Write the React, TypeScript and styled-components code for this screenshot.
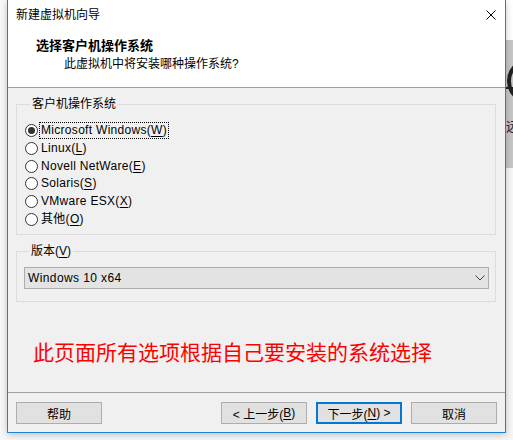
import styled, { createGlobalStyle } from 'styled-components';

const GlobalStyle = createGlobalStyle`
  html, body {
    margin: 0;
    padding: 0;
  }
  body {
    background: #f8f8f8;
    color: #000;
    font-family: "Liberation Sans", "Noto Sans CJK SC", sans-serif;
    font-size: 12px;
  }
`;

const Desktop = styled.div`
  display: flex;
  width: 513px;
  height: 440px;
  padding-left: 7px;
  box-sizing: border-box;
  overflow: hidden;
  background: #f8f8f8;
`;

const Window = styled.div`
  width: 499px;
  height: 433px;
  flex-shrink: 0;
  display: flex;
  flex-direction: column;
  box-sizing: border-box;
  background: #f0f0f0;
  border: 1px solid #1883d7;
  border-top: none;
  box-shadow: 0 2px 7px rgba(0, 0, 0, 0.22);
  position: relative;
  z-index: 1;
`;

const TitleBar = styled.div`
  height: 30px;
  display: flex;
  align-items: center;
  justify-content: space-between;
  padding: 0 9px 0 8px;
  background: #fff;
  line-height: 16px;
`;

const Header = styled.div`
  height: 57px;
  display: flex;
  flex-direction: column;
  padding-left: 28px;
  background: #fff;
`;

const HeaderTitle = styled.div`
  margin-top: 8px;
  font-size: 13px;
  font-weight: 700;
  line-height: 16px;
`;

const HeaderSub = styled.div`
  margin-top: 2px;
  padding-left: 28px;
  line-height: 16px;
`;

const Divider = styled.div`
  height: 1px;
  flex-shrink: 0;
  background: #a0a0a0;
`;

const Body = styled.div`
  flex: 1;
  display: flex;
  flex-direction: column;
  padding: 8px 9px 0 8px;
`;

const Group = styled.fieldset<{ $pad: string }>`
  margin: 0;
  min-width: 0;
  padding: ${(p) => p.$pad};
  border: 1px solid #dcdcdc;
  & + & {
    margin-top: 8px;
  }
`;

const Legend = styled.legend`
  margin-left: 5px;
  padding: 0 2px;
  line-height: 16px;
`;

const RadioRow = styled.div`
  height: 17.7px;
  display: flex;
  align-items: center;
`;

const RadioCircle = styled.span<{ $checked?: boolean }>`
  width: 13px;
  height: 13px;
  flex-shrink: 0;
  box-sizing: border-box;
  border: 1px solid #333;
  border-radius: 50%;
  background: #fff;
  display: flex;
  align-items: center;
  justify-content: center;
  &::after {
    content: '';
    width: 7px;
    height: 7px;
    border-radius: 50%;
    background: ${(p) => (p.$checked ? '#333' : 'transparent')};
  }
`;

const RadioLabel = styled.span<{ $focused?: boolean }>`
  margin-left: 1px;
  padding: 0 1px;
  line-height: 15px;
  letter-spacing: 0.3px;
  border: 1px dotted ${(p) => (p.$focused ? '#000' : 'transparent')};
`;

const Key = styled.u`
  text-decoration: underline;
  text-underline-offset: 2px;
`;

const Combo = styled.div`
  height: 22px;
  box-sizing: border-box;
  display: flex;
  align-items: center;
  justify-content: space-between;
  padding: 0 3px;
  border: 1px solid #adadad;
  background: #e3e3e3;
  letter-spacing: 0.4px;
`;

const Note = styled.div`
  margin-top: 38px;
  padding-left: 17px;
  color: #ff0000;
  font-size: 21px;
  line-height: 26px;
`;

const Footer = styled.div`
  display: flex;
  justify-content: space-between;
  padding: 9px 8px 8px;
`;

const ButtonGroup = styled.div`
  display: flex;
  gap: 9px;
`;

const Button = styled.button<{ $primary?: boolean }>`
  width: 86px;
  height: 22px;
  box-sizing: border-box;
  padding: 0;
  display: flex;
  align-items: center;
  justify-content: center;
  font: inherit;
  color: #000;
  background: #e1e1e1;
  border: ${(p) => (p.$primary ? '2px solid #0078d7' : '1px solid #adadad')};
`;

const Strip = styled.div`
  width: 7px;
  flex-shrink: 0;
  display: flex;
  flex-direction: column;
  overflow: hidden;
`;

const StripTop = styled.div`
  height: 40px;
  background: #fff;
`;

const StripShade = styled.div`
  height: 128px;
  position: relative;
  background: #c6c6c6;
  overflow: hidden;
`;

const StripGlyph = styled.span`
  position: absolute;
  left: 0;
  top: 79px;
  color: #223;
  font-size: 13px;
  line-height: 16px;
  white-space: nowrap;
`;

const StripRest = styled.div`
  flex: 1;
  background: #f6f6f6;
`;

const CloseIcon = () => (
  <svg width="10" height="10" viewBox="0 0 10 10">
    <path d="M0.5 0.5 L9.5 9.5 M9.5 0.5 L0.5 9.5" stroke="#000" strokeWidth="1" />
  </svg>
);

const Chevron = () => (
  <svg width="10" height="6" viewBox="0 0 10 6">
    <path d="M0.5 0.5 L5 5 L9.5 0.5" fill="none" stroke="#444" strokeWidth="1" />
  </svg>
);

const systems = [
  { name: 'Microsoft Windows', key: 'W' },
  { name: 'Linux', key: 'L' },
  { name: 'Novell NetWare', key: 'E' },
  { name: 'Solaris', key: 'S' },
  { name: 'VMware ESX', key: 'X' },
  { name: '其他', key: 'O' },
];

export default function App() {
  return (
    <>
      <GlobalStyle />
      <Desktop>
        <Window>
          <TitleBar>
            <span>新建虚拟机向导</span>
            <CloseIcon />
          </TitleBar>
          <Header>
            <HeaderTitle>选择客户机操作系统</HeaderTitle>
            <HeaderSub>此虚拟机中将安装哪种操作系统?</HeaderSub>
          </Header>
          <Divider />
          <Body>
            <Group $pad="10px 8px 6px 8px">
              <Legend>客户机操作系统</Legend>
              {systems.map((s, i) => (
                <RadioRow key={s.key}>
                  <RadioCircle $checked={i === 0} />
                  <RadioLabel $focused={i === 0}>
                    {s.name}(<Key>{s.key}</Key>)
                  </RadioLabel>
                </RadioRow>
              ))}
            </Group>
            <Group $pad="8px 6px 12px 7px">
              <Legend>
                版本(<Key>V</Key>)
              </Legend>
              <Combo>
                <span>Windows 10 x64</span>
                <Chevron />
              </Combo>
            </Group>
            <Note>此页面所有选项根据自己要安装的系统选择</Note>
          </Body>
          <Divider />
          <Footer>
            <Button>帮助</Button>
            <ButtonGroup>
              <Button>
                &lt; 上一步(<Key>B</Key>)
              </Button>
              <Button $primary>
                下一步(<Key>N</Key>) &gt;
              </Button>
              <Button>取消</Button>
            </ButtonGroup>
          </Footer>
        </Window>
        <Strip>
          <StripTop />
          <StripShade>
            <svg width="7" height="70" viewBox="0 0 7 70">
              <circle cx="24" cy="41" r="21" fill="none" stroke="#222" strokeWidth="4" />
              <path d="M0 48 H7" stroke="#222" strokeWidth="2" />
            </svg>
            <StripGlyph>远</StripGlyph>
          </StripShade>
          <StripRest />
        </Strip>
      </Desktop>
    </>
  );
}
